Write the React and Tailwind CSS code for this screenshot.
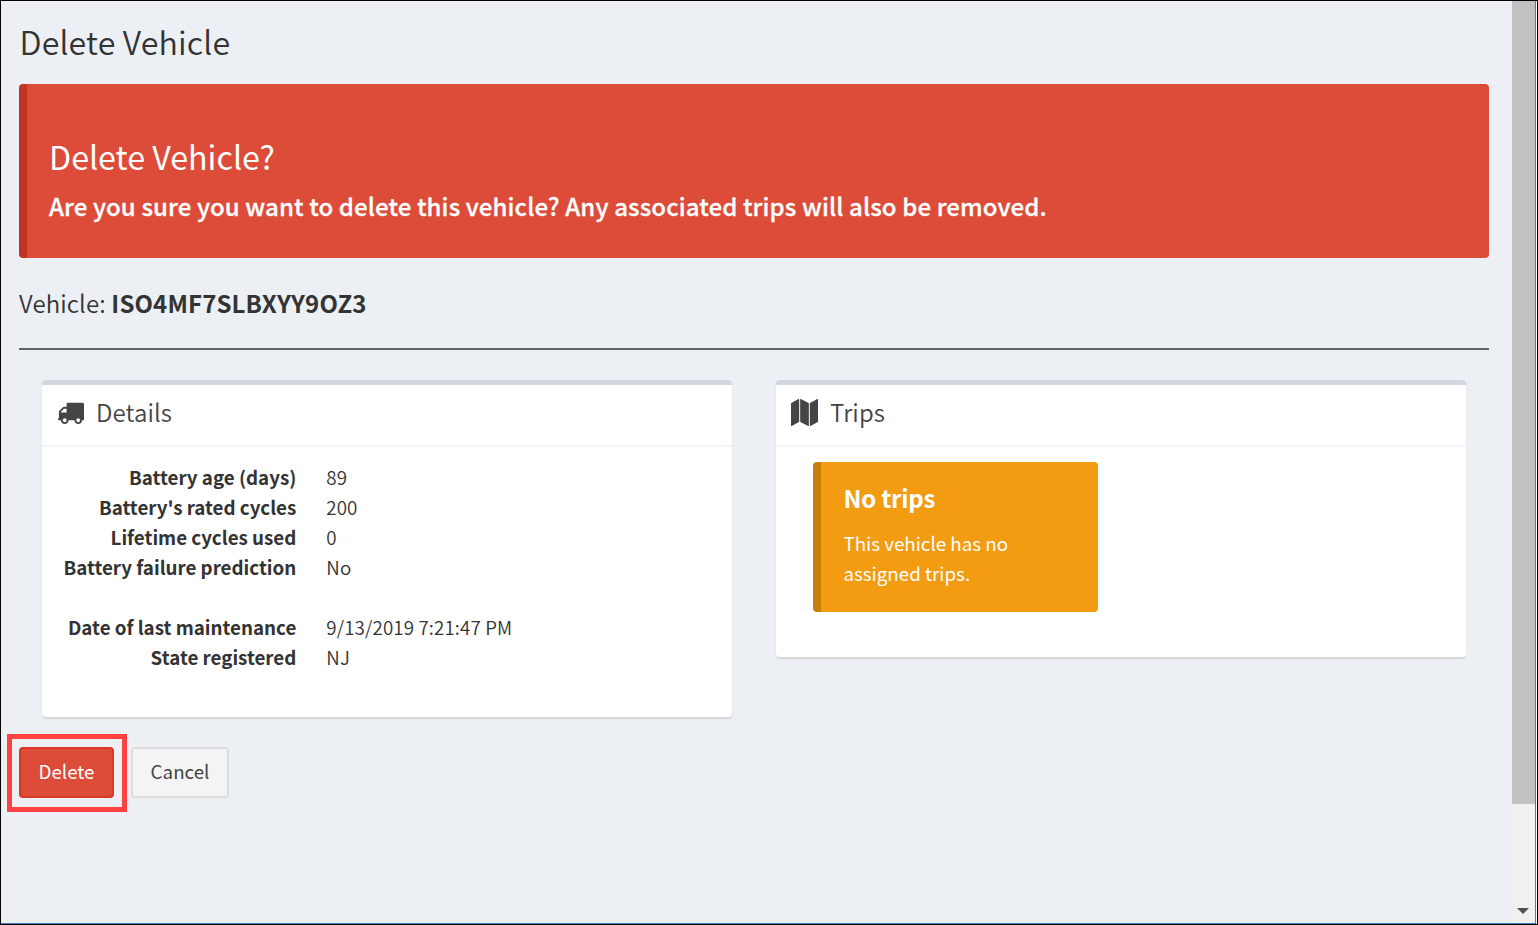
const details = [
  ["Battery age (days)", "89"],
  ["Battery's rated cycles", "200"],
  ["Lifetime cycles used", "0"],
  ["Battery failure prediction", "No"],
  null,
  ["Date of last maintenance", "9/13/2019 7:21:47 PM"],
  ["State registered", "NJ"],
];

function TruckIcon() {
  return (
    <svg viewBox="0 0 1792 1792" className="mb-px h-[27px] w-[27px] shrink-0" fill="currentColor">
      <path d="M640 1408q0-52-38-90t-90-38-90 38-38 90 38 90 90 38 90-38 38-90zm-384-512h384v-256h-158q-13 0-22 9l-195 195q-9 9-9 22v30zm1280 512q0-52-38-90t-90-38-90 38-38 90 38 90 90 38 90-38 38-90zm256-1088v1024q0 15-4 26.5t-13.5 18.5-16.5 11.5-23.5 6-22.5 2-25.5 0-22.5-.5q0 106-75 181t-181 75-181-75-75-181h-384q0 106-75 181t-181 75-181-75-75-181h-64q-3 0-22.5.5t-25.5 0-22.5-2-23.5-6-16.5-11.5-13.5-18.5-4-26.5q0-26 19-45t45-19v-320q0-8-.5-35t0-38 2.5-34.5 6.5-37 14-30.5 22.5-30l198-198q19-19 50.5-32t58.5-13h160v-192q0-26 19-45t45-19h1024q26 0 45 19t19 45z" />
    </svg>
  );
}

function MapIcon() {
  return (
    <svg viewBox="0 0 1792 1792" className="mb-px h-[27px] w-[27px] shrink-0" fill="currentColor">
      <path d="M512 0q13 0 22.5 9.5t9.5 22.5v1472q0 20-17 28l-480 256q-7 4-15 4-13 0-22.5-9.5t-9.5-22.5v-1472q0-20 17-28l480-256q7-4 15-4zm1248 0q13 0 22.5 9.5t9.5 22.5v1472q0 20-17 28l-480 256q-7 4-15 4-13 0-22.5-9.5t-9.5-22.5v-1472q0-20 17-28l480-256q7-4 15-4zm-1120 0q8 0 14 3l512 256q18 10 18 29v1472q0 13-9.5 22.5t-22.5 9.5q-8 0-14-3l-512-256q-18-10-18-29v-1472q0-13 9.5-22.5t22.5-9.5z" />
    </svg>
  );
}

function Box({ icon, title, className, children }) {
  return (
    <section className={`w-[690px] rounded-[4px] border-t-[5px] border-[#d2d6de] bg-white shadow-[0_1.5px_1.5px_rgba(0,0,0,0.1)] ${className}`}>
      <header className="flex h-[62px] items-center border-b-2 border-[#f4f4f4] pb-[4px] pl-[15px] text-[#444]">
        {icon}
        <h3 className="mb-[2px] ml-[12px] text-[24px] leading-[30px] font-[350] tracking-[0.12px]">{title}</h3>
      </header>
      {children}
    </section>
  );
}

export default function App() {
  return (
    <div className="flex h-[925px] w-[1538px] overflow-hidden border border-black bg-[#ecf0f5] font-['Noto_Sans_CJK_SC',sans-serif] text-[18.75px] text-[#333]">
      <main className="flex h-[923px] w-[1511px] flex-col border-b border-[#4080c0] pl-[18px]">
        <h1 className="mt-[20px] h-[40px] pl-[0.5px] text-[32.2px] leading-[40px] font-[350] tracking-[0.15px]">Delete Vehicle</h1>
        <div className="mt-[23px] h-[174px] w-[1470px] rounded-[4px] border-l-[8px] border-[#c23321] bg-[#dd4b39] pl-[22px] text-white">
          <h2 className="mt-[52px] text-[32.2px] leading-[40px]">Delete Vehicle?</h2>
          <p className="mt-[15px] text-[24px] leading-[30px] font-medium tracking-[0.12px] [-webkit-text-stroke:0.3px_white]">Are you sure you want to delete this vehicle? Any associated trips will also be removed.</p>
        </div>
        <h3 className="mt-[30px] text-[24px] leading-[30px] font-[350] tracking-[0.13px]">
          Vehicle: <b className="font-bold">ISO4MF7SLBXYY9OZ3</b>
        </h3>
        <hr className="mt-[30px] w-[1470px] border-t-2 border-[#616468]" />
        <div className="mt-[30px] ml-[23px] flex items-start gap-[44px]">
          <Box className="h-[337px]" title="Details" icon={<TruckIcon />}>
            <dl className="pt-[15px]">
              {details.map((row, i) =>
                row ? (
                  <div key={i} className="flex h-[30px] gap-[30px] leading-[30px]">
                    <dt className="w-[254.3px] text-right font-bold whitespace-nowrap">{row[0]}</dt>
                    <dd className="font-[350] tracking-[0.12px]">{row[1]}</dd>
                  </div>
                ) : (
                  <div key={i} className="h-[30px]" />
                ),
              )}
            </dl>
          </Box>
          <Box className="h-[277px]" title="Trips" icon={<MapIcon />}>
            <div className="mt-[15px] ml-[37px] h-[150px] w-[285px] rounded-[4px] border-l-[8px] border-[#c87f0a] bg-[#f39c12] pt-[21px] pl-[22.5px] text-white">
              <h4 className="text-[24px] leading-[30px] font-bold tracking-[-0.25px]">No trips</h4>
              <p className="mt-[15px] w-[200px] leading-[30px]">This vehicle has no assigned trips.</p>
            </div>
          </Box>
        </div>
        <div className="mt-[17px] -ml-[12px] flex items-start">
          <div className="h-[78px] w-[120px] border-[5px] border-[#ff4142] pt-[8px] pl-[7px]">
            <button className="block h-[51px] w-[95px] rounded-[4px] border-2 border-[#d73925] bg-[#dd4b39] pb-[2px] text-white">Delete</button>
          </div>
          <button className="mt-[13px] ml-[4px] h-[51px] w-[98px] rounded-[4px] border-2 border-[#ddd] bg-[#f4f4f4] pb-[2px] text-[#444]">Cancel</button>
        </div>
      </main>
      <aside className="flex h-[923px] w-[23px] flex-col items-center border-b border-[#4080c0] bg-[#f0f0f0] pr-px">
        <div className="h-[803px] w-[23px] shrink-0 bg-[#c1c1c1]" />
        <svg viewBox="0 0 12 6" className="mt-auto mb-[9px] h-[6px] w-[12px]" fill="#505050">
          <path d="M0 0h12L6 6z" />
        </svg>
      </aside>
      <div className="w-[2px] border-r border-white bg-[#4080c0]" />
    </div>
  );
}
